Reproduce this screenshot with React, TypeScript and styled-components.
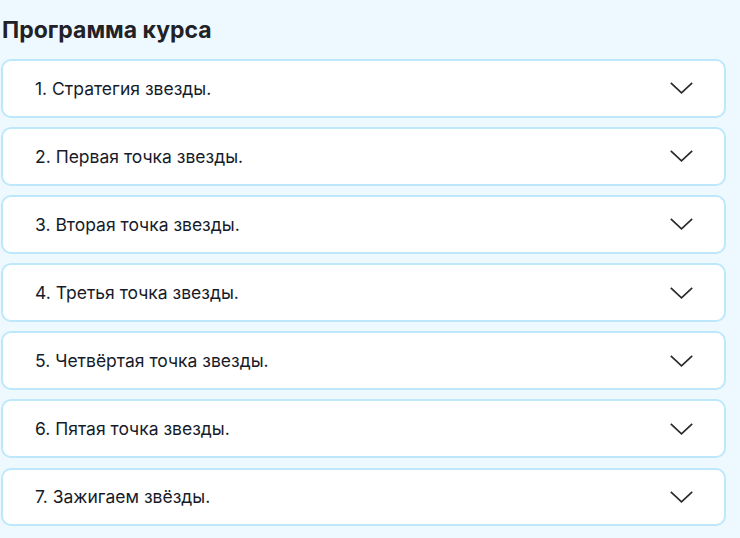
import styled, { createGlobalStyle } from "styled-components";

const GlobalStyle = createGlobalStyle`
  html, body {
    margin: 0;
    padding: 0;
    background: #eef9ff;
  }
  body {
    font-family: Inter, "Noto Sans", sans-serif;
    color: #1a1d29;
  }
`;

const Section = styled.section`
  width: 725px;
  padding: 13px 0 0 1px;
`;

const Title = styled.h2`
  margin: 0 0 12px 1px;
  font-size: 23px;
  line-height: 34px;
  font-weight: 700;
  color: #222126;
  letter-spacing: 0;
`;

const List = styled.div`
  display: flex;
  flex-direction: column;
  gap: 9.6px;
`;

const Item = styled.button`
  display: flex;
  align-items: center;
  justify-content: space-between;
  height: 58.5px;
  box-sizing: border-box;
  padding: 0 31px 0 32px;
  background: #ffffff;
  border: 2px solid #bde8fc;
  border-radius: 10px;
  font-family: inherit;
  text-align: left;
  cursor: pointer;
`;

const Label = styled.span`
  font-size: 17.5px;
  font-weight: 400;
  color: #161b2a;
`;

const Chevron = () => (
  <svg width="23" height="12" viewBox="0 0 23 12" fill="none">
    <path d="M0.8 0.8 L11.5 10.8 L22.2 0.8" stroke="#2a2a2e" strokeWidth="1.7" />
  </svg>
);

const modules = [
  "1. Стратегия звезды.",
  "2. Первая точка звезды.",
  "3. Вторая точка звезды.",
  "4. Третья точка звезды.",
  "5. Четвёртая точка звезды.",
  "6. Пятая точка звезды.",
  "7. Зажигаем звёзды.",
];

export default function App() {
  return (
    <>
      <GlobalStyle />
      <Section>
        <Title>Программа курса</Title>
        <List>
          {modules.map((m) => (
            <Item key={m}>
              <Label>{m}</Label>
              <Chevron />
            </Item>
          ))}
        </List>
      </Section>
    </>
  );
}
